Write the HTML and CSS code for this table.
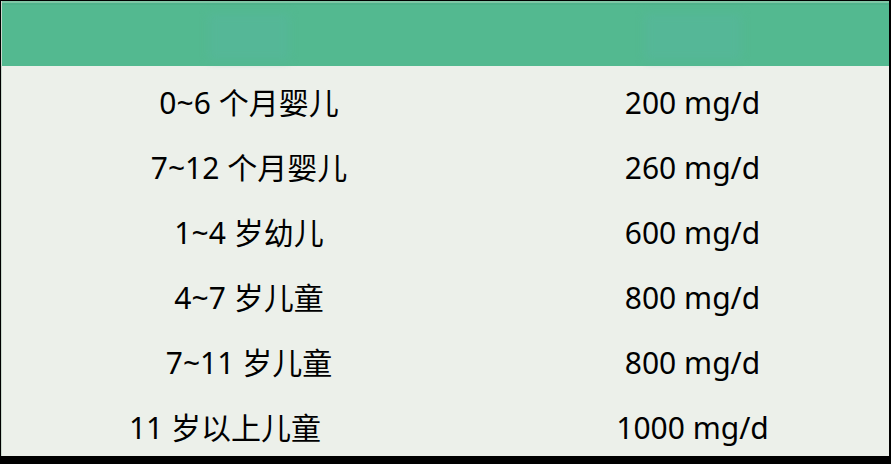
FILE: index.html
```html
<!DOCTYPE html>
<html lang="zh">
<head>
<meta charset="utf-8">
<link rel="stylesheet" href="styles.css">
</head>
<body>
<div class="table">
  <div class="head">
    <div class="hcell"><span class="blur b1"></span></div>
    <div class="hcell"><span class="blur b2"></span></div>
  </div>
  <div class="row"><div class="cell">0~6 个月婴儿</div><div class="cell">200 mg/d</div></div>
  <div class="row"><div class="cell">7~12 个月婴儿</div><div class="cell">260 mg/d</div></div>
  <div class="row"><div class="cell">1~4 岁幼儿</div><div class="cell">600 mg/d</div></div>
  <div class="row"><div class="cell">4~7 岁儿童</div><div class="cell">800 mg/d</div></div>
  <div class="row"><div class="cell">7~11 岁儿童</div><div class="cell">800 mg/d</div></div>
  <div class="row"><div class="cell shift">11 岁以上儿童</div><div class="cell">1000 mg/d</div></div>
</div>
</body>
</html>
```
FILE: styles.css
```css
html, body {
  margin: 0;
  padding: 0;
  background: #000;
  width: 891px;
  height: 464px;
  overflow: hidden;
}
.table {
  margin: 1px 0 0 1px;
  width: 888px;
  height: 455px;
  background: #ecf0ea;
  font-family: "Noto Sans", "Noto Sans CJK SC", sans-serif;
  font-size: 30px;
  color: #000;
  border-left: 1px solid #c9d8cc;
  box-sizing: border-box;
}
.head {
  height: 65px;
  background: #53b990;
  display: grid;
  grid-template-columns: 494px 1fr;
  border-top: 2px solid #7fc7a6;
  box-sizing: border-box;
  box-shadow: inset 0 2px 0 #4fb38b;
}
.hcell {
  display: flex;
  align-items: center;
  justify-content: center;
}
.blur {
  display: block;
  height: 46px;
  margin-top: 4px;
  background: #55b797;
  filter: blur(4px);
}
.b1 { width: 80px; margin-left: 0; }
.b2 { width: 96px; margin-left: 0; }
.row {
  display: grid;
  grid-template-columns: 494px 1fr;
  height: 65px;
  align-items: center;
}
.row:first-of-type {
  border-top: 2px solid #f7fbf6;
}
.cell {
  text-align: center;
  padding-top: 9px;
  line-height: 40px;
  white-space: nowrap;
}
.shift {
  padding-right: 48px;
}
```
